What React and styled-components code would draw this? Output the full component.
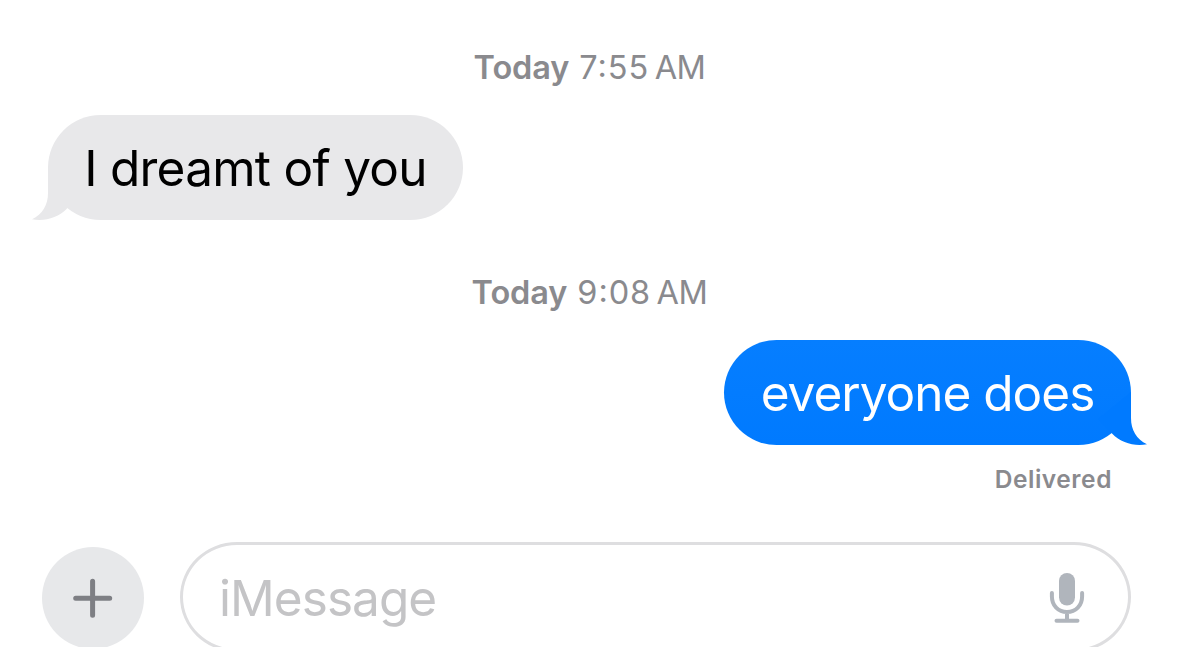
import React from "react";
import styled, { createGlobalStyle } from "styled-components";

const GlobalStyle = createGlobalStyle`
  *, *::before, *::after { box-sizing: border-box; }
  body {
    margin: 0;
    background: #fff;
    overflow: hidden;
    font-family: Inter, "Liberation Sans", sans-serif;
  }
`;

const Screen = styled.main`
  width: 1179px;
  height: 647px;
  overflow: hidden;
  display: flex;
  flex-direction: column;
  background: #fff;
`;

const Timestamp = styled.div`
  display: flex;
  justify-content: center;
  align-items: baseline;
  height: 40px;
  line-height: 40px;
  margin-top: ${(p) => p.$top}px;
  font-size: 32.5px;
  color: #8a8a8e;
  white-space: nowrap;
`;

const Day = styled.span`
  font-weight: 600;
  letter-spacing: -0.1px;
  margin-right: 10px;
`;

const Time = styled.span`
  letter-spacing: 0.9px;
`;

const Colon = styled.span`
  position: relative;
  top: -2.5px;
`;

const Period = styled.span`
  margin-left: 5.5px;
  letter-spacing: -0.5px;
`;

const Row = styled.div`
  display: flex;
  justify-content: ${(p) => (p.$sent ? "flex-end" : "flex-start")};
  margin-top: ${(p) => p.$top}px;
  padding: 0 48px;
`;

const Bubble = styled.div`
  position: relative;
  width: ${(p) => p.$width}px;
  height: 105px;
  display: flex;
  align-items: center;
  justify-content: center;
  border-radius: 52.5px;
  background: ${(p) => (p.$sent ? "linear-gradient(#067eff, #007aff)" : "#e8e8ea")};
  color: ${(p) => (p.$sent ? "#fff" : "#000")};
  font-size: 49.5px;
  letter-spacing: ${(p) => p.$spacing}px;
  white-space: nowrap;
`;

const Tail = styled.svg`
  position: absolute;
  bottom: 0;
  ${(p) => (p.$sent ? "right: -16px; transform: scaleX(-1);" : "left: -16px;")}
  width: 50px;
  height: 56px;
  fill: ${(p) => (p.$sent ? "#007aff" : "#e8e8ea")};
`;

const BubbleTail = ({ sent }) => (
  <Tail $sent={sent} viewBox="0 0 50 56">
    <path d="M16 3V29C16 41 10.500 50.500 0 55.200C12.500 57.500 26 54 35 44.500L49 30Z" />
  </Tail>
);

const Status = styled.div`
  align-self: flex-end;
  margin: 18px 67px 0 0;
  height: 32px;
  line-height: 32px;
  font-size: 24.5px;
  font-weight: 600;
  letter-spacing: 0.55px;
  color: #8a8a8e;
`;

const Composer = styled.div`
  display: flex;
  align-items: flex-start;
  gap: 36px;
  flex-shrink: 0;
  margin-top: 47px;
  padding-left: 42px;
`;

const AddButton = styled.button`
  width: 102px;
  height: 102px;
  margin: 5px 0 0;
  padding: 0;
  border: 0;
  border-radius: 50%;
  background: #e7e8ea;
  display: grid;
  place-items: center;
`;

const Field = styled.div`
  width: 951px;
  height: 110px;
  border: 3px solid #dedee0;
  border-radius: 57px / 55px;
  padding: 0 43px 0 36px;
  display: flex;
  align-items: center;
  justify-content: space-between;
`;

const Placeholder = styled.span`
  font-size: 49.5px;
  color: #c4c4c6;
  letter-spacing: -0.95px;
  margin-top: 2px;
`;

const MicIcon = styled.svg`
  width: 36px;
  height: 52px;
  margin-top: 2px;
  fill: none;
  stroke: #b0b5bc;
  stroke-width: 4;
  stroke-linecap: round;
`;

const DateLine = ({ top, hour, minute }) => (
  <Timestamp $top={top}>
    <Day>Today</Day>
    <Time>
      {hour}
      <Colon>:</Colon>
      {minute}
    </Time>
    <Period>AM</Period>
  </Timestamp>
);

export default function App() {
  return (
    <>
      <GlobalStyle />
      <Screen>
        <DateLine top={48} hour="7" minute="55" />
        <Row $top={27}>
          <Bubble $width={415} $spacing={-0.75}>
            <BubbleTail />
            I dreamt of you
          </Bubble>
        </Row>
        <DateLine top={53} hour="9" minute="08" />
        <Row $sent $top={27}>
          <Bubble $sent $width={407} $spacing={-1}>
            <BubbleTail sent />
            everyone does
          </Bubble>
        </Row>
        <Status>Delivered</Status>
        <Composer>
          <AddButton aria-label="Add">
            <svg width="40" height="40" viewBox="0 0 40 40" fill="none" stroke="#7e7f84" strokeWidth="5" strokeLinecap="round">
              <path d="M2.700 20.200H36.700M19.600 3.200V37.200" />
            </svg>
          </AddButton>
          <Field>
            <Placeholder>iMessage</Placeholder>
            <MicIcon viewBox="0 0 36 52">
              <rect x="10" y="1" width="16" height="32.500" rx="8" fill="#b0b5bc" stroke="none" />
              <path d="M2.900 21V24.500C2.900 33.500 9.200 40 18 40S33.100 33.500 33.100 24.500V21M18 40V48M7.500 48.800H28.500" />
            </MicIcon>
          </Field>
        </Composer>
      </Screen>
    </>
  );
}
